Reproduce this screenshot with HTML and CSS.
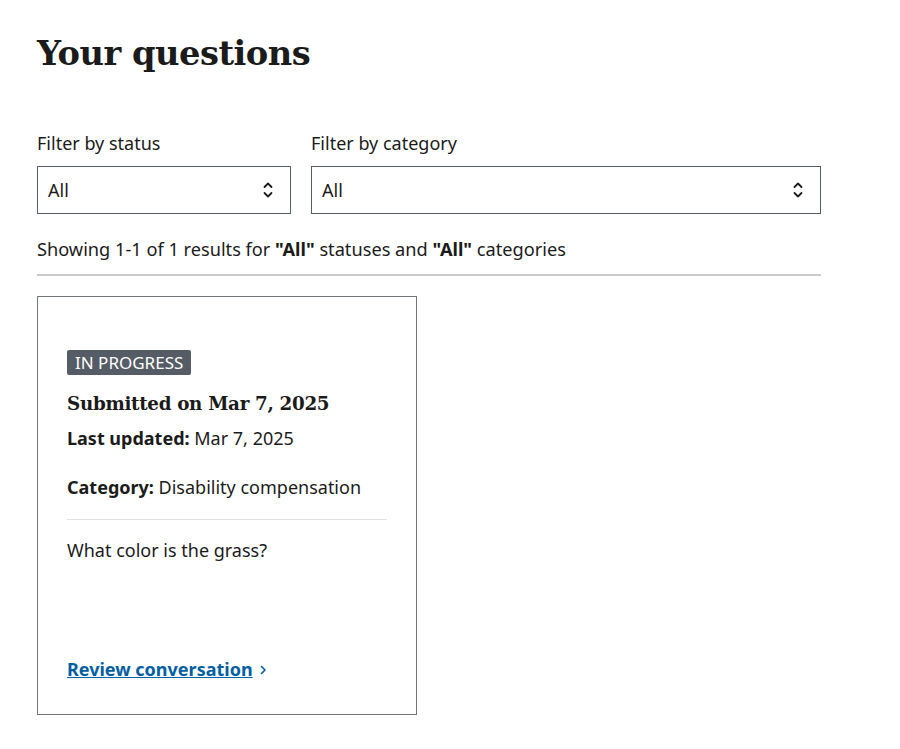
FILE: index.html
```html
<!DOCTYPE html>
<html lang="en">
<head>
<meta charset="utf-8">
<title>Your questions</title>
<link rel="stylesheet" href="styles.css">
</head>
<body>
<main class="page">
  <h1 class="title">Your questions</h1>
  <div class="filters">
    <div class="field field-status">
      <label class="label" for="status">Filter by status</label>
      <div class="select">
        <span class="select-value">All</span>
        <svg class="select-icon" width="10" height="18" viewBox="0 0 10 18" aria-hidden="true"><path d="M1.5 6 L5 2.5 L8.5 6 M1.5 12 L5 15.5 L8.5 12" fill="none" stroke="#1b1b1b" stroke-width="1.8" stroke-linecap="round" stroke-linejoin="round"/></svg>
      </div>
    </div>
    <div class="field field-category">
      <label class="label" for="category">Filter by category</label>
      <div class="select">
        <span class="select-value">All</span>
        <svg class="select-icon" width="10" height="18" viewBox="0 0 10 18" aria-hidden="true"><path d="M1.5 6 L5 2.5 L8.5 6 M1.5 12 L5 15.5 L8.5 12" fill="none" stroke="#1b1b1b" stroke-width="1.8" stroke-linecap="round" stroke-linejoin="round"/></svg>
      </div>
    </div>
  </div>
  <p class="results">Showing 1-1 of 1 results for <strong>"All"</strong> statuses and <strong>"All"</strong> categories</p>
  <hr class="rule">
  <div class="cards">
    <article class="card">
      <span class="badge">IN PROGRESS</span>
      <h2 class="card-title">Submitted on Mar 7, 2025</h2>
      <p class="meta"><strong>Last updated:</strong> Mar 7, 2025</p>
      <p class="meta meta-cat"><strong>Category:</strong> Disability compensation</p>
      <hr class="card-rule">
      <p class="question">What color is the grass?</p>
      <div class="action">
        <a class="link" href="#">Review conversation</a>
        <svg class="chev" width="7" height="10" viewBox="0 0 7 10" aria-hidden="true"><path d="M1.5 1.5 L5 5 L1.5 8.5" fill="none" stroke="#005ea2" stroke-width="1.6" stroke-linecap="round" stroke-linejoin="round"/></svg>
      </div>
    </article>
  </div>
</main>
</body>
</html>
```
FILE: styles.css
```css
* { box-sizing: border-box; }
html, body { margin: 0; padding: 0; background: #fff; }
body {
  font-family: "Noto Sans", "Lato", sans-serif;
  color: #1b1b1b;
  font-size: 18px;
}
.page { padding: 0 37px; width: 858px; }
.title {
  font-family: "DejaVu Serif", serif;
  font-weight: bold;
  font-size: 33.7px;
  margin: 31px 0 0;
  line-height: 44px;
  letter-spacing: -0.5px;
}
.filters { display: flex; gap: 20px; margin-top: 56px; }
.field { display: flex; flex-direction: column; }
.field-status { width: 254px; }
.field-category { width: 510px; }
.label { font-size: 18px; line-height: 24px; }
.select {
  margin-top: 11px;
  height: 48px;
  border: 1px solid #565c65;
  display: flex;
  align-items: center;
  justify-content: space-between;
  padding: 0 17px 0 10px;
}
.select-value { font-size: 18px; }
.select-icon { display: block; }
.results { margin: 20px 0 0; line-height: 30px; font-size: 18.2px; }
.results strong { font-weight: 700; }
.rule { border: 0; border-top: 2px solid #c9c9c9; margin: 10px 0 0; }
.cards { margin-top: 20px; }
.card {
  width: 380px;
  min-height: 419px;
  border: 1px solid #71767a;
  padding: 53px 29px 32px;
  display: flex;
  flex-direction: column;
  align-items: flex-start;
}
.badge {
  background: #565c65;
  color: #fff;
  font-size: 17px;
  line-height: 25px;
  padding: 0 8px;
  border-radius: 2px;
}
.card-title {
  font-family: "DejaVu Serif", serif;
  font-size: 18.3px;
  font-weight: bold;
  margin: 16px 0 0;
  line-height: 26px;
  letter-spacing: -0.3px;
}
.meta { margin: 8px 0 0; line-height: 26px; }
.meta-cat { margin-top: 23px; }
.card-rule { width: 100%; border: 0; border-top: 1px solid #dfe1e2; margin: 19px 0 0; }
.question { margin: 17px 0 0; line-height: 26px; }
.action { margin-top: auto; display: flex; align-items: center; gap: 7px; }
.link {
  color: #005ea2;
  font-weight: 700;
  text-decoration: underline;
  line-height: 26px;
}
.chev { display: block; margin-top: 1px; }
```
